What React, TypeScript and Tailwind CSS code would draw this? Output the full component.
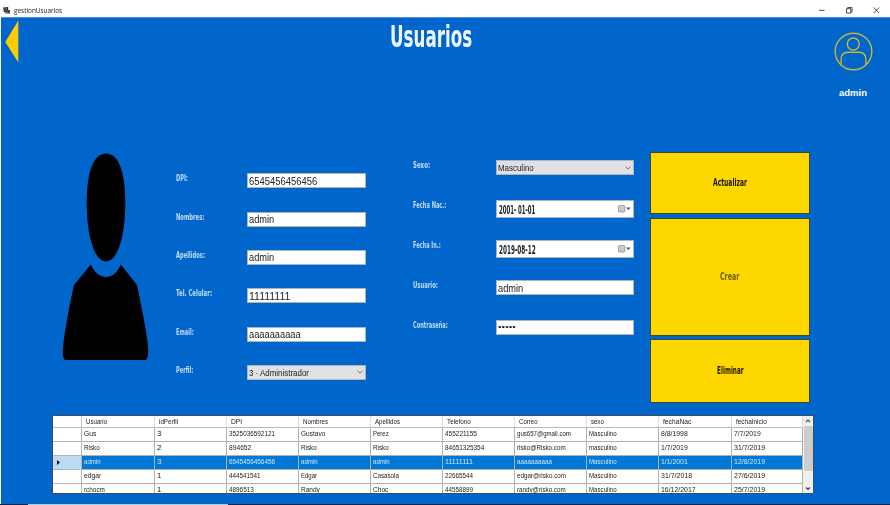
import { useLayoutEffect, useRef, useState } from "react";

// Condenses or widens a run of text so that it fills an exact width.
function Fit({ text, w, className = "" }: { text: string; w: number; className?: string }) {
  const ref = useRef<HTMLSpanElement>(null);
  const [scale, setScale] = useState(1);
  useLayoutEffect(() => {
    if (ref.current) setScale(w / ref.current.offsetWidth);
  }, [w, text]);
  return (
    <span className={`flex shrink-0 items-center ${className}`} style={{ width: w }}>
      <span ref={ref} className="block origin-left whitespace-pre" style={{ transform: `scaleX(${scale})` }}>
        {text}
      </span>
    </span>
  );
}

const agency = "font-['DejaVu_Sans',sans-serif] font-bold";

function Label({ text, w }: { text: string; w: number }) {
  return <Fit text={text} w={w} className={`${agency} h-[10px] text-[9.3px] leading-[10px] text-[#c3dcf5]`} />;
}

function Chevron() {
  return (
    <svg className="h-[4px] w-[6px]" viewBox="0 0 6 4" fill="none" stroke="#666" strokeWidth="0.9">
      <path d="M0.5 0.6 3 3.1 5.5 0.6" />
    </svg>
  );
}

function Calendar() {
  return (
    <svg className="h-[8px] w-[13px]" viewBox="0 0 13 8">
      <rect x="0.6" y="0.6" width="6" height="6.4" rx="0.6" fill="#d8d5d3" stroke="#8b8583" strokeWidth="0.8" />
      <path d="M1.5 3h4.4M1.5 5h4.4M2.8 2v4.4M4.7 2v4.4" stroke="#b5b0ae" strokeWidth="0.4" />
      <path d="M8 2.6h4.6L10.3 5.1z" fill="#3f5068" />
    </svg>
  );
}

const left = [
  { label: "DPI:", lw: 12, value: "6545456456456", w: 68 },
  { label: "Nombres:", lw: 28.5, value: "admin", w: 25 },
  { label: "Apellidos:", lw: 29, value: "admin", w: 25 },
  { label: "Tel. Celular:", lw: 36, value: "11111111", w: 41 },
  { label: "Email:", lw: 17.5, value: "aaaaaaaaaa", w: 52 },
  { label: "Perfil:", lw: 17.5, value: "3 · Administrador", w: 60, select: true },
];

const right = [
  { label: "Sexo:", lw: 17, value: "Masculino", w: 36, kind: "select" },
  { label: "Fecha Nac.:", lw: 33.5, value: "2001- 01-01", w: 36.5, kind: "date" },
  { label: "Fecha In.:", lw: 27.5, value: "2019-08-12", w: 36.5, kind: "date" },
  { label: "Usuario:", lw: 25, value: "admin", w: 25, kind: "text" },
  { label: "Contraseña:", lw: 35, value: "•••••", w: 17.5, kind: "password" },
];

const columns: [string, number][] = [
  ["Usuario", 21], ["idPerfil", 19], ["DPI", 11], ["Nombres", 25], ["Apellidos", 25],
  ["Telefono", 24], ["Correo", 18.5], ["sexo", 13], ["fechaNac", 28], ["fechaInicio", 31],
];

const rows: [string, number][][] = [
  [["Gus", 12], ["3", 4], ["3525036592121", 46], ["Gustavo", 24], ["Perez", 16], ["455221155", 32], ["gus657@gmail.com", 54], ["Masculino", 28], ["8/8/1998", 27], ["7/7/2019", 27]],
  [["Risko", 16], ["2", 4], ["894652", 22], ["Risko", 16], ["Risko", 16], ["84651325354", 39], ["risko@Risko.com", 49], ["masculino", 28], ["1/7/2019", 27], ["31/7/2019", 31]],
  [["admin", 17], ["3", 4], ["6545456456456", 46], ["admin", 17], ["admin", 17], ["11111111", 28], ["aaaaaaaaaa", 35], ["Masculino", 28], ["1/1/2001", 27], ["12/8/2019", 31]],
  [["edgar", 17], ["1", 4], ["444541541", 32], ["Edgar", 16], ["Casasola", 26], ["22665544", 28], ["edgar@risko.com", 49], ["Masculino", 28], ["31/7/2018", 31], ["27/6/2019", 31]],
  [["rchocm", 21], ["1", 4], ["4896513", 25], ["Randy", 19], ["Choc", 15], ["44558899", 28], ["randy@risko.com", 49], ["Masculino", 28], ["16/12/2017", 35], ["25/7/2019", 31]],
];

const cols = "grid grid-cols-[29px_73px_72px_72px_72px_72px_72px_72px_72px_73px_71px]";

function Titlebar() {
  return (
    <header className="flex h-[17px] items-center bg-white pl-[3px] text-[#222]">
      <svg className="mt-[4px] h-[7px] w-[8px]" viewBox="0 0 8 7">
        <path d="M0 0.5 5.2 0v4.8L1 5.2z" fill="#333" />
        <path d="M5 3h2v3.5H2.3V5.2H5z" fill="#444" />
        <path d="M1.3 1.7h2.8M1.5 3.2h2.7" stroke="#999" strokeWidth="0.5" />
      </svg>
      <Fit text="gestionUsuarios" w={48.5} className="mt-[4px] ml-[3px] font-['Open_Sans',sans-serif] text-[7px] leading-[10px]" />
      <svg className="mt-[3px] mr-[8px] ml-auto h-[8px] w-[64px]" viewBox="0 0 64 8" fill="none" stroke="#222" strokeWidth="0.8">
        <path d="M1 4.3h5.5M28.5 2.7h4.2v4.4h-4.2zM29.6 2.5v-1h4.4v4.6h-1.1M55.6 1.5l5.5 5.5M61.1 1.5l-5.5 5.5" />
      </svg>
    </header>
  );
}

export default function App() {
  return (
    <div className="flex h-[505px] w-[890px] flex-col overflow-hidden bg-white font-['Liberation_Sans',sans-serif] text-[#222]">
      <Titlebar />
      <main className="ml-px flex h-[487px] flex-col border-t border-[#4b91dc] bg-[#0066cc]">
        <section className="flex h-[134px] items-start">
          <svg className="mt-[2px] ml-[4px] h-[43px] w-[14px]" viewBox="0 0 14 43">
            <path d="M13.3 0.5v42L0.3 22z" fill="#ffcc00" />
          </svg>
          <Fit text="Usuarios" w={82} className={`${agency} mt-[2px] ml-[371px] text-[30px] leading-[34px] text-[#eef6ff]`} />
          <div className="ml-auto flex w-[74px] flex-col items-center pt-[14px]">
            <svg className="h-[39px] w-[39px]" viewBox="0 0 39 39" fill="none" stroke="#c9b535" strokeWidth="1.4">
              <circle cx="19.5" cy="19.5" r="18.3" />
              <circle cx="19.3" cy="12" r="6" />
              <path d="M7.1 33.2v-5.5q0-7.4 7-7.4h10.8q7 0 7 7.4v5.5" />
            </svg>
            <Fit text="admin" w={28} className="mt-[16px] text-[9.5px] leading-[12px] font-bold text-white" />
          </div>
        </section>

        <section className="flex h-[263px] items-start">
          <svg className="mt-[1px] ml-[61px] h-[208px] w-[88px] blur-[0.6px]" viewBox="0 0 88 208">
            <path d="M44 0.5C31 0.5 24.7 20 24.7 50c0 34 8 58.5 19.3 58.5S63.3 84 63.3 50C63.3 20 57 0.5 44 0.5z" />
            <path d="M28.7 111.5C33 120 38 124 44 124s11-4 14.8-12.5L75 132c4 18 9 44 11 60 .6 8 .4 15-3 15H4c-3.5 0-3.5-7-2.8-15C3 176 8 150 12 132z" />
          </svg>
          <div className="mt-[21.4px] ml-[26px] flex w-[190px] flex-col gap-[23.3px]">
            {left.map((f) => (
              <div key={f.label} className="flex h-[15px] items-center">
                <div className="w-[71px] pb-[5px]">
                  <Label text={f.label} w={f.lw} />
                </div>
                <div className={`flex h-[15px] w-[119px] items-center justify-between border border-[#a5b6c6] pr-[2px] pl-[1px] ${f.select ? "bg-[#e1e1e1]" : "bg-white"}`}>
                  <Fit text={f.value} w={f.w} className={f.select ? "pt-px text-[8.6px] leading-[10px]" : "pt-[2px] text-[10px] leading-[12px]"} />
                  {f.select && <Chevron />}
                </div>
              </div>
            ))}
          </div>
          <div className="mt-[8px] ml-[47px] flex w-[221px] flex-col">
            {right.map((f) => (
              <div key={f.label} className="flex h-[40px] items-start">
                <div className="w-[83px]">
                  <Label text={f.label} w={f.lw} />
                </div>
                <div
                  className={`flex w-[138px] items-center justify-between border border-[#a5b6c6] pr-[2px] pl-[1px] ${f.kind === "date" ? "h-[18px]" : "h-[15px]"} ${f.kind === "select" ? "bg-[#e1e1e1]" : "bg-white"}`}
                >
                  {f.kind === "password" ? (
                    <Fit text={f.value} w={f.w} className="pb-[1px] text-[7px] leading-[10px]" />
                  ) : f.kind === "date" ? (
                    <Fit text={f.value} w={f.w} className={`${agency} ml-px pt-px text-[11.8px] leading-[14px]`} />
                  ) : (
                    <Fit text={f.value} w={f.w} className={f.kind === "select" ? "pt-px text-[8.6px] leading-[10px]" : "pt-[2px] text-[10px] leading-[12px]"} />
                  )}
                  {f.kind === "select" && <Chevron />}
                  {f.kind === "date" && <Calendar />}
                </div>
              </div>
            ))}
          </div>
          <div className={`${agency} ml-[16px] flex w-[160px] flex-col text-[11.3px] leading-[14px] text-[#1a1600]`}>
            <button className="flex h-[62px] items-center justify-center border border-[#3b4a2a] bg-[#ffd700]">
              <Fit text="Actualizar" w={34} />
            </button>
            <button className="mt-[4px] flex h-[118px] items-center justify-center border border-[#3b4a2a] bg-[#ffd700] text-[#6f6100]">
              <Fit text="Crear" w={19.5} />
            </button>
            <button className="mt-[3px] flex h-[64px] items-center justify-center border border-[#3b4a2a] bg-[#ffd700]">
              <Fit text="Eliminar" w={26.5} />
            </button>
          </div>
        </section>

        <section className="ml-[51px] flex h-[79px] w-[762px] overflow-hidden border border-[#3d4c60] bg-white text-[7.9px] leading-[10px]">
          <div className="w-[750px] shrink-0">
            <div className={`${cols} h-[12px] border-b border-[#b8b8b8]`}>
              <div className="border-r border-[#c9c9c9]" />
              {columns.map(([t, w]) => (
                <div key={t} className="flex items-center border-r border-[#dedede] pt-px pl-[4px]">
                  <Fit text={t} w={w} />
                </div>
              ))}
            </div>
            {rows.map((r, i) => (
              <div key={i} className={`${cols} h-[13.9px] ${i === 2 ? "text-[#cfe6fa]" : ""}`}>
                <div className={`flex items-center border-r border-b border-[#b5b5b5] pl-[4px] ${i === 2 ? "bg-[#bcdcf4]" : ""}`}>
                  {i === 2 && (
                    <svg className="h-[5px] w-[3px]" viewBox="0 0 3 5">
                      <path d="M0 0 3 2.5 0 5z" fill="#111" />
                    </svg>
                  )}
                </div>
                {r.map(([t, w], j) => (
                  <div key={j} className={`flex items-center border-r border-b border-[#b0b0b0] pl-[2px] ${i === 2 ? "bg-[#0078d7]" : ""}`}>
                    <Fit text={t} w={w} />
                  </div>
                ))}
              </div>
            ))}
          </div>
          <div className="flex w-[10px] shrink-0 flex-col items-center bg-[#f0f0f0]">
            <svg className="h-[10px] w-[6px]" viewBox="0 0 6 10" fill="none" stroke="#444" strokeWidth="1.2">
              <path d="M1 6.2 3 4.2 5 6.2" />
            </svg>
            <div className="h-[45px] w-[9px] bg-[#cdcdcd]" />
            <svg className="mt-auto h-[9px] w-[6px]" viewBox="0 0 6 9" fill="none" stroke="#444" strokeWidth="1.2">
              <path d="M1 3.5 3 5.5 5 3.5" />
            </svg>
          </div>
        </section>
      </main>
      <footer className="flex h-px bg-[#06264f]">
        <div className="w-[28px] bg-[#06264f]" />
        <div className="w-[200px] bg-[#a9cdf0]" />
      </footer>
    </div>
  );
}
